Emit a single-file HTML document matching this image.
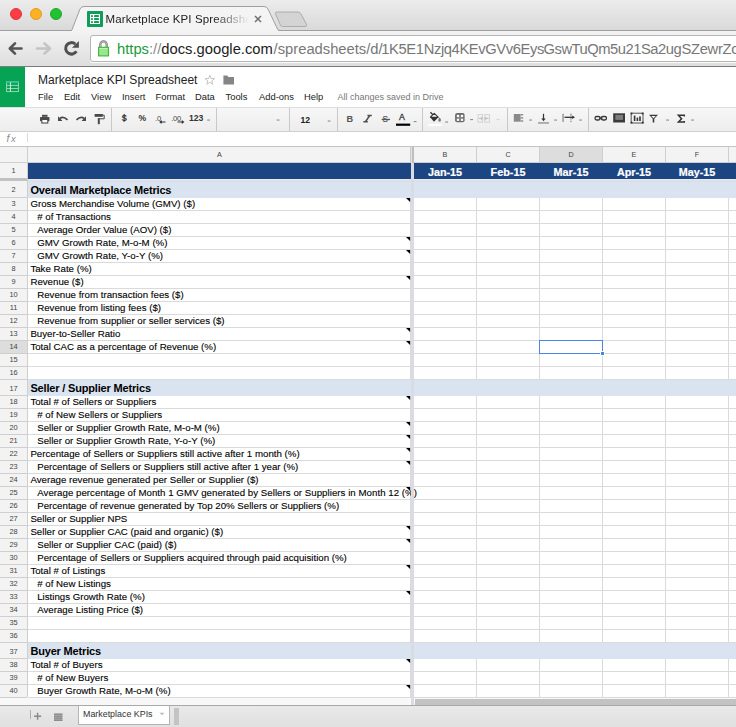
<!DOCTYPE html>
<html><head><meta charset="utf-8">
<style>
*{box-sizing:border-box}
html,body{margin:0;padding:0}
body{width:736px;height:727px;overflow:hidden;position:relative;background:#fff;font-family:"Liberation Sans",sans-serif;}
.a{position:absolute}
.t{position:absolute;white-space:nowrap;line-height:1}
svg{position:absolute;overflow:visible}
</style></head><body>

<!-- ============ CHROME TAB BAR ============ -->
<div class="a" style="left:0;top:0;width:736px;height:31px;background:linear-gradient(#ececec,#d9d9d9)"></div>
<div class="a" style="left:0;top:30px;width:736px;height:1px;background:#a0a0a0"></div>
<!-- traffic lights -->
<div class="a" style="left:10px;top:8px;width:12px;height:12px;border-radius:50%;background:#fc3c44;border:0.5px solid #e0343a"></div>
<div class="a" style="left:30px;top:8px;width:12px;height:12px;border-radius:50%;background:#fdb124;border:0.5px solid #e19c1e"></div>
<div class="a" style="left:50px;top:8px;width:12px;height:12px;border-radius:50%;background:#22c132;border:0.5px solid #1ca82a"></div>
<!-- active tab -->
<svg style="left:0;top:0" width="736" height="31">
  <path d="M71.5,31 L80,9 Q81.2,6.5 84,6.5 L264,6.5 Q266.8,6.5 268,9 L277.5,29 Q278.2,30.5 280,30.5" fill="#f4f4f4" stroke="#a0a0a0" stroke-width="1"/>
  <path d="M275.5,13.8 Q275,12 277,12 L298,12 Q300,12 301,14 L306.5,24.5 Q307.2,26.5 305,26.5 L282.5,26.5 Q281,26.5 280.4,25 Z" fill="#d4d4d4" stroke="#acacac" stroke-width="1"/>
</svg>
<div class="a" style="left:72px;top:30px;width:206px;height:2px;background:#f2f2f2"></div>
<!-- favicon -->
<div class="a" style="left:87px;top:11px;width:16px;height:16px;background:#0f9d58;border-radius:1px"></div>
<svg style="left:87px;top:11px" width="16" height="16">
  <rect x="3" y="3" width="10" height="10" fill="#fff"/>
  <g fill="#0f9d58">
    <rect x="4" y="4" width="1.9" height="1.9" rx="0.4"/><rect x="4" y="7.05" width="1.9" height="1.9" rx="0.4"/><rect x="4" y="10.1" width="1.9" height="1.9" rx="0.4"/>
    <rect x="7" y="4" width="5" height="1.9" rx="0.4"/><rect x="7" y="7.05" width="5" height="1.9" rx="0.4"/><rect x="7" y="10.1" width="5" height="1.9" rx="0.4"/>
  </g>
</svg>
<div class="t" style="left:105.5px;top:14.3px;letter-spacing:0.12px;font-size:11.5px;color:#222;width:146px;height:15px;overflow:hidden;-webkit-mask-image:linear-gradient(90deg,#000 74%,transparent 98%);">Marketplace KPI Spreadsheet</div>
<svg style="left:0;top:0" width="300" height="30"><path d="M255,16 L261,22 M261,16 L255,22" stroke="#707070" stroke-width="1.5"/></svg>

<!-- ============ CHROME TOOLBAR ============ -->
<div class="a" style="left:0;top:31px;width:736px;height:35px;background:linear-gradient(#f3f3f3,#dedede)"></div>
<div class="a" style="left:0;top:66px;width:736px;height:1px;background:#7c7c7c"></div>
<!-- back -->
<svg style="left:8px;top:42px" width="16" height="13">
  <path d="M13.5,6.5 L2.5,6.5 M7,1.3 L1.8,6.5 L7,11.7" fill="none" stroke="#555" stroke-width="2.6" stroke-linecap="round" stroke-linejoin="round"/>
</svg>
<svg style="left:36px;top:42px" width="16" height="13">
  <path d="M1,6.5 L13.5,6.5 M8.5,1.5 L14,6.5 L8.5,11.5" fill="none" stroke="#c4c4c4" stroke-width="2.6" stroke-linecap="round" stroke-linejoin="round"/>
</svg>
<svg style="left:60px;top:38px" width="24" height="22">
  <path d="M16.38,13.31 A5.75,5.75 0 1 1 15.3,6.1" fill="none" stroke="#505050" stroke-width="3"/>
  <path d="M12,9.8 L18.9,9.8 L18.9,3.1 Z" fill="#505050"/>
</svg>
<!-- url box -->
<div class="a" style="left:90px;top:35px;width:700px;height:27px;background:#fff;border:1px solid #b5b5b5;border-radius:3px;box-shadow:0 1px 0 #fafafa"></div>
<!-- lock -->
<svg style="left:90px;top:36px" width="30" height="26">
  <path d="M10.3,11 L10.3,8.6 A3.2,3.2 0 0 1 16.7,8.6 L16.7,11" fill="none" stroke="#7a7a7a" stroke-width="2.3"/>
  <path d="M10.3,11 L10.3,8.6 A3.2,3.2 0 0 1 16.7,8.6 L16.7,11" fill="none" stroke="#d8d8d8" stroke-width="0.7"/>
  <rect x="8.6" y="11.3" width="9.8" height="8.6" fill="#99e98b" stroke="#3bb53b" stroke-width="1.1"/>
  <rect x="9.2" y="12" width="8.6" height="0.8" fill="#c8f2c0"/>
</svg>
<div class="t" style="left:117px;top:42px;font-size:14.75px;color:#222"><span style="color:#1a9b3a">https</span><span style="color:#8a8a8a">://</span>docs.google.com</div>
<div class="t" style="left:273.6px;top:42px;font-size:14.75px;color:#777">/spreadsheets/d/</div>
<div class="t" style="left:381.3px;top:42px;font-size:14.75px;color:#777;letter-spacing:-0.39px">1K5E1Nzjq4KEvGVv6Eys</div>
<div class="t" style="left:543.6px;top:42px;font-size:14.75px;color:#777;letter-spacing:-0.49px">GswTuQm5u21Sa2ug</div>
<div class="t" style="left:681.4px;top:42px;font-size:14.75px;color:#777;letter-spacing:-0.3px">SZewrZc</div>

<!-- ============ SHEETS HEADER ============ -->
<div class="a" style="left:0;top:67px;width:25px;height:40px;background:#06a354"></div>
<svg style="left:0;top:74px" width="26" height="26">
  <rect x="6.6" y="7.8" width="11.8" height="9.8" fill="none" stroke="#9edcb9" stroke-width="0.9"/>
  <rect x="6.2" y="7.2" width="12.6" height="1.7" fill="#34c19a"/>
  <path d="M6.6,11.4 L18.4,11.4 M6.6,14.5 L18.4,14.5" stroke="#9edcb9" stroke-width="0.9"/>
  <path d="M10.4,8.4 L10.4,17.6" stroke="#d7f2df" stroke-width="1"/>
</svg>
<div class="t" style="left:38px;top:74px;font-size:12px;color:#222">Marketplace KPI Spreadsheet</div>
<svg style="left:200px;top:70px" width="20" height="20"><path d="M9.80,5.20 L11.03,8.50 L14.56,8.65 L11.80,10.85 L12.74,14.25 L9.80,12.30 L6.86,14.25 L7.80,10.85 L5.04,8.65 L8.57,8.50 Z" fill="none" stroke="#bdbdbd" stroke-width="0.9"/></svg>
<svg style="left:223px;top:75px" width="12" height="10">
  <path d="M0.4,0.6 L4.2,0.6 L5.4,2 L11,2 L11,9.6 L0.4,9.6 Z" fill="#858585"/>
</svg>
<div class="t" style="left:38px;top:92px;font-size:9.4px;color:#222">File</div>
<div class="t" style="left:64px;top:92px;font-size:9.4px;color:#222">Edit</div>
<div class="t" style="left:91px;top:92px;font-size:9.4px;color:#222">View</div>
<div class="t" style="left:122px;top:92px;font-size:9.4px;color:#222">Insert</div>
<div class="t" style="left:155.5px;top:92px;font-size:9.4px;color:#222">Format</div>
<div class="t" style="left:195px;top:92px;font-size:9.4px;color:#222">Data</div>
<div class="t" style="left:225.5px;top:92px;font-size:9.4px;color:#222">Tools</div>
<div class="t" style="left:259px;top:92px;font-size:9.4px;color:#222">Add-ons</div>
<div class="t" style="left:304px;top:92px;font-size:9.4px;color:#222">Help</div>
<div class="t" style="left:337.5px;top:92.6px;font-size:9px;color:#777">All changes saved in Drive</div>

<!-- ============ SHEETS TOOLBAR ============ -->
<div class="a" style="left:0;top:107px;width:736px;height:25px;background:linear-gradient(#f7f7f7,#ededed);border-top:1px solid #dedede;border-bottom:1px solid #cfcfcf"></div>
<svg style="left:0;top:0" width="736" height="135" viewBox="0 0 736 135">
<g fill="#c8c8c8">
  <rect x="111" y="108" width="1" height="23"/>
  <rect x="216" y="108" width="1" height="23"/>
  <rect x="289" y="108" width="1" height="23"/>
  <rect x="337" y="108" width="1" height="23"/>
  <rect x="422" y="108" width="1" height="23"/>
  <rect x="507" y="108" width="1" height="23"/>
  <rect x="588" y="108" width="1" height="23"/>
</g>
<!-- print -->
<g fill="#4a4a4a">
  <rect x="42" y="114.8" width="5.5" height="2"/>
  <rect x="40" y="117" width="9.5" height="4.2" rx="0.8"/>
  <rect x="41.8" y="119.5" width="6" height="3.5" fill="#fff" stroke="#4a4a4a" stroke-width="1.1"/>
</g>
<!-- undo -->
<path d="M60,118.5 Q63,115.8 67.5,119.8" fill="none" stroke="#4a4a4a" stroke-width="1.8"/>
<path d="M58,116.2 L58,121 L62.5,121 Z" fill="#4a4a4a"/>
<!-- redo -->
<path d="M84,118.5 Q81,115.8 76.5,119.8" fill="none" stroke="#4a4a4a" stroke-width="1.8"/>
<path d="M86,116.2 L86,121 L81.5,121 Z" fill="#4a4a4a"/>
<!-- paint format -->
<g fill="#4a4a4a">
  <rect x="94.6" y="114" width="8.2" height="2.8"/>
  <path d="M102.5,115.2 L104.2,115.2 L104.2,118.8 L99.2,118.8 L99.2,118" fill="none" stroke="#4a4a4a" stroke-width="1"/>
  <rect x="97.8" y="118.2" width="2" height="6"/>
</g>
<!-- $ % -->
<text x="121.6" y="120.6" font-family="Liberation Sans" font-weight="bold" font-size="9.2" fill="#333" transform="translate(121.6,0) scale(0.9,1) translate(-121.6,0)">S</text>
<rect x="123.6" y="113.9" width="1.1" height="8" fill="#333"/>
<text x="138.6" y="120.8" font-family="Liberation Sans" font-weight="bold" font-size="8.6" fill="#333" transform="translate(0,120.8) scale(1,1.12) translate(0,-120.8)">%</text>
<!-- .0 -->
<text x="155" y="121" font-family="Liberation Sans" font-size="7.6" fill="#444">.0</text>
<path d="M160,122 L165.5,122 M161.7,120.6 L160,122 L161.7,123.4" fill="none" stroke="#333" stroke-width="1.1"/>
<!-- .00 -->
<text x="171.3" y="121" font-family="Liberation Sans" font-size="7.6" fill="#444" letter-spacing="-0.3">.00</text>
<path d="M177.5,122 L183.5,122 M181.8,120.6 L183.5,122 L181.8,123.4" fill="none" stroke="#333" stroke-width="1.1"/>
<!-- 123 -->
<text x="189" y="121" font-family="Liberation Sans" font-weight="bold" font-size="8.6" fill="#333">123</text>
<g fill="#8c8c8c">
  <rect x="207.2" y="119.5" width="2.8" height="1.1"/>
  <rect x="276.7" y="119.5" width="2.8" height="1.1"/>
  <rect x="327.7" y="120.5" width="2.8" height="1.1"/>
  <rect x="413.7" y="121.0" width="2.8" height="1.1"/>
  <rect x="445.2" y="121.5" width="2.8" height="1.1"/>
  <rect x="470.2" y="119.0" width="2.8" height="1.1"/>
  <rect x="529.2" y="119.5" width="2.8" height="1.1"/>
  <rect x="554.2" y="119.5" width="2.8" height="1.1"/>
  <rect x="579.2" y="119.5" width="2.8" height="1.1"/>
  <rect x="666.2" y="119.5" width="2.8" height="1.1"/>
  <rect x="691.2" y="119.5" width="2.8" height="1.1"/>
</g>
<rect x="496.7" y="119.0" width="2.8" height="1.1" fill="#d4d4d4"/>
<!-- 12 -->
<text x="300.5" y="123" font-family="Liberation Sans" font-weight="bold" font-size="8.6" fill="#222">12</text>
<!-- B I S A -->
<text x="346.5" y="122.3" font-family="Liberation Sans" font-weight="bold" font-size="9.2" fill="#555">B</text>
<path d="M369.6,115.8 L365.6,121.5 M367.4,115.6 L371.8,115.6 M363.4,121.7 L367.8,121.7" fill="none" stroke="#505050" stroke-width="1.5"/>
<text x="382.6" y="122" font-family="Liberation Sans" font-size="8.2" fill="#555" stroke="#555" stroke-width="0.2">S</text>
<rect x="381.7" y="118.8" width="8.3" height="1.3" fill="#555"/>
<text x="399" y="120.3" font-family="Liberation Sans" font-size="8.8" fill="#333" stroke="#333" stroke-width="0.3">A</text>
<rect x="396" y="123.6" width="14.2" height="2.2" fill="#000"/>
<!-- paint bucket -->
<path d="M430.4,112.2 L433.6,115.4" stroke="#333" stroke-width="1.3"/>
<path d="M434.2,113.4 L430.4,117.2 L438.2,117.2 Z" fill="#fafafa" stroke="#333" stroke-width="1.1" stroke-linejoin="round"/>
<path d="M430,117 L438.6,117 L434,121.7 Z" fill="#333"/>
<path d="M439.6,117.6 Q441.2,119.4 441,120.3 A1.4,1.4 0 0 1 438.2,120.3 Q438,119.4 439.6,117.6 Z" fill="#7a7a7a"/>
<rect x="428.1" y="124.1" width="13.8" height="1.8" fill="#fff"/>
<!-- borders -->
<rect x="455.1" y="113.1" width="9.5" height="9.1" rx="2" fill="#6a6a6a"/>
<g fill="#fbfbfb">
  <rect x="456.8" y="114.8" width="2.4" height="2.4"/><rect x="460.8" y="114.8" width="2.4" height="2.4"/>
  <rect x="456.8" y="118.5" width="2.4" height="2.4"/><rect x="460.8" y="118.5" width="2.4" height="2.4"/>
</g>
<rect x="459.2" y="114.8" width="1.6" height="6.1" fill="#8a8a8a"/>
<rect x="456.8" y="117.2" width="6.4" height="1.3" fill="#8a8a8a"/>
<!-- merge faded -->
<g fill="none" stroke="#d2d2d2" stroke-width="1">
  <rect x="478" y="114.6" width="4.6" height="7.6"/>
  <rect x="484.8" y="114.6" width="4.6" height="7.6"/>
</g>
<path d="M478.8,118.4 L482.6,118.4 M481.2,117 L482.6,118.4 L481.2,119.8 M488.6,118.4 L484.8,118.4 M486.2,117 L484.8,118.4 L486.2,119.8" fill="none" stroke="#c4c4c4" stroke-width="1.1"/>
<!-- align left -->
<g fill="#8a8a8a">
  <rect x="513.8" y="114" width="6.8" height="7.7"/>
  <rect x="520.6" y="114" width="2.6" height="1.4"/>
  <rect x="520.6" y="117.2" width="2.6" height="1.4"/>
  <rect x="520.6" y="120.3" width="2.6" height="1.4"/>
</g>
<!-- valign bottom -->
<path d="M543.5,113.8 L543.5,119.5" stroke="#333" stroke-width="1.2"/>
<path d="M541.3,118.4 L543.5,121.2 L545.7,118.4 Z" fill="#333"/>
<rect x="538" y="122.2" width="11" height="1.5" fill="#9a9a9a"/>
<!-- wrap -->
<rect x="562.2" y="113.8" width="1.8" height="8.2" fill="#a8a8a8"/>
<path d="M570.9,113.6 L570.9,122.2" stroke="#b0b0b0" stroke-width="1.7" stroke-dasharray="2.6,0.9"/>
<path d="M564.5,117.3 L573,117.3" stroke="#333" stroke-width="1.3"/>
<path d="M572.2,115.5 L575,117.3 L572.2,119.1 Z" fill="#333"/>
<!-- link -->
<g fill="none" stroke="#3a3a3a" stroke-width="1.3">
  <rect x="595" y="116.5" width="5.2" height="3.5" rx="1.75"/>
  <rect x="601.3" y="116.5" width="5.2" height="3.5" rx="1.75"/>
  <path d="M599,118.25 L602.5,118.25"/>
</g>
<!-- comment -->
<rect x="613.2" y="113.3" width="11.8" height="9.2" fill="#3a3a3a"/>
<rect x="615.4" y="114.9" width="7.6" height="5" fill="#7d7d7d"/>
<!-- chart -->
<rect x="631.2" y="113.2" width="11.8" height="9.8" fill="none" stroke="#555" stroke-width="1"/>
<g fill="#333">
  <rect x="630.6" y="112.6" width="1.8" height="1.8"/><rect x="641.8" y="112.6" width="1.8" height="1.8"/>
  <rect x="630.6" y="121.7" width="1.8" height="1.8"/><rect x="641.8" y="121.7" width="1.8" height="1.8"/>
  <rect x="633.8" y="115.6" width="1.6" height="5.4"/>
  <rect x="636.6" y="117.6" width="1.6" height="3.4"/>
  <rect x="639.2" y="116.4" width="1.6" height="4.6"/>
</g>
<!-- filter -->
<path d="M649,114.8 L658,114.8 L654.3,118.8 L654.3,122.5 L652.7,122.5 L652.7,118.8 Z" fill="#3a3a3a"/>
<path d="M651.3,116 L655.7,116 L653.5,118.3 Z" fill="#f4f4f4"/>
<!-- sigma -->
<path d="M684.3,116.4 L684.3,115.2 L678.4,115.2 L681.6,118.65 L678.4,122.1 L684.3,122.1 L684.3,120.9" fill="none" stroke="#333" stroke-width="1.5" stroke-linejoin="miter"/>
</svg>


<!-- ============ FORMULA BAR ============ -->
<div class="a" style="left:0;top:132px;width:736px;height:15px;background:#fff;border-bottom:1px solid #c9c9c9"></div>
<div class="t" style="left:6.5px;top:133.2px;font-style:italic;font-size:10.5px;color:#8c8c8c">f</div><div class="t" style="left:11px;top:133.6px;font-style:italic;font-size:9.5px;color:#8c8c8c">x</div>
<div class="a" style="left:27px;top:133px;width:1px;height:9px;background:#d3dae2"></div>


<!-- ============ BOTTOM ============ -->
<div class="a" style="left:0;top:697px;width:736px;height:8px;background:#f8f8f8"></div>
<div class="a" style="left:415px;top:699px;width:321px;height:6px;background:#c3c3c3"></div>
<div class="a" style="left:0;top:705px;width:736px;height:22px;background:linear-gradient(#e9e9e9,#e0e0e0);border-top:1px solid #a8a8a8"></div>
<div class="a" style="left:30px;top:710px;width:1px;height:8.5px;background:#b0b0b0"></div>
<svg style="left:0;top:700px" width="200" height="27">
  <path d="M37.6,12.8 L37.6,19.8 M34,16.3 L41.2,16.3" stroke="#8a8a8a" stroke-width="1.5"/>
  <rect x="54" y="13.6" width="8.4" height="7.4" fill="#a6a6a6"/><g fill="#8c8c8c"><rect x="54" y="13.6" width="8.4" height="1.3"/><rect x="54" y="16.2" width="8.4" height="1"/><rect x="54" y="18.2" width="8.4" height="1"/><rect x="54" y="20" width="8.4" height="1"/></g>
</svg>
<div class="a" style="left:78px;top:705px;width:92px;height:20px;background:#fff;border:1px solid #b4b4b4;border-top-color:#a8a8a8"></div>
<div class="t" style="left:83px;top:709.7px;font-size:8.9px;color:#333">Marketplace KPIs</div>
<svg style="left:159px;top:712px" width="6" height="4"><path d="M0.5,0.7 L5.5,0.7 L3,3.2 Z" fill="#bdbdbd"/></svg>
<div class="a" style="left:174px;top:708px;width:5px;height:17px;background:#c4c4c4"></div>
<div class="a" style="left:0;top:146px;width:736px;height:1px;background:#c4c4c4"></div>
<div class="a" style="left:0;top:147px;width:736px;height:15px;background:#f3f3f3"></div>
<div class="a" style="left:540px;top:147px;width:62px;height:15px;background:#dddddd"></div>
<div class="a" style="left:0;top:162px;width:736px;height:1px;background:#cfcfcf"></div>
<div class="a" style="left:0;top:163px;width:27px;height:534px;background:#f3f3f3"></div>
<div class="a" style="left:27px;top:147px;width:1px;height:550px;background:#cfcfcf"></div>
<div class="a" style="left:476px;top:147px;width:1px;height:15px;background:#cfcfcf"></div>
<div class="a" style="left:539px;top:147px;width:1px;height:15px;background:#cfcfcf"></div>
<div class="a" style="left:602px;top:147px;width:1px;height:15px;background:#cfcfcf"></div>
<div class="a" style="left:665px;top:147px;width:1px;height:15px;background:#cfcfcf"></div>
<div class="a" style="left:728px;top:147px;width:1px;height:15px;background:#cfcfcf"></div>
<div class="t" style="left:199.5px;width:40px;text-align:center;top:150.91px;font-size:7.2px;color:#444">A</div>
<div class="t" style="left:425px;width:40px;text-align:center;top:150.91px;font-size:7.2px;color:#444">B</div>
<div class="t" style="left:488px;width:40px;text-align:center;top:150.91px;font-size:7.2px;color:#444">C</div>
<div class="t" style="left:551px;width:40px;text-align:center;top:150.91px;font-size:7.2px;color:#444">D</div>
<div class="t" style="left:614px;width:40px;text-align:center;top:150.91px;font-size:7.2px;color:#444">E</div>
<div class="t" style="left:677px;width:40px;text-align:center;top:150.91px;font-size:7.2px;color:#444">F</div>
<div class="a" style="left:410px;top:181px;width:1px;height:516px;background:#dadada"></div>
<div class="a" style="left:476px;top:181px;width:1px;height:516px;background:#dadada"></div>
<div class="a" style="left:539px;top:181px;width:1px;height:516px;background:#dadada"></div>
<div class="a" style="left:602px;top:181px;width:1px;height:516px;background:#dadada"></div>
<div class="a" style="left:665px;top:181px;width:1px;height:516px;background:#dadada"></div>
<div class="a" style="left:728px;top:181px;width:1px;height:516px;background:#dadada"></div>
<div class="a" style="left:28px;top:163px;width:708px;height:16px;background:#1c4682"></div>
<div class="a" style="left:0;top:197px;width:27px;height:1px;background:#cfcfcf"></div>
<div class="a" style="left:28px;top:182px;width:708px;height:16px;background:#dae4f0"></div>
<div class="a" style="left:0;top:210px;width:27px;height:1px;background:#cfcfcf"></div>
<div class="a" style="left:28px;top:210px;width:708px;height:1px;background:#dadada"></div>
<div class="a" style="left:0;top:223px;width:27px;height:1px;background:#cfcfcf"></div>
<div class="a" style="left:28px;top:223px;width:708px;height:1px;background:#dadada"></div>
<div class="a" style="left:0;top:236px;width:27px;height:1px;background:#cfcfcf"></div>
<div class="a" style="left:28px;top:236px;width:708px;height:1px;background:#dadada"></div>
<div class="a" style="left:0;top:249px;width:27px;height:1px;background:#cfcfcf"></div>
<div class="a" style="left:28px;top:249px;width:708px;height:1px;background:#dadada"></div>
<div class="a" style="left:0;top:262px;width:27px;height:1px;background:#cfcfcf"></div>
<div class="a" style="left:28px;top:262px;width:708px;height:1px;background:#dadada"></div>
<div class="a" style="left:0;top:275px;width:27px;height:1px;background:#cfcfcf"></div>
<div class="a" style="left:28px;top:275px;width:708px;height:1px;background:#dadada"></div>
<div class="a" style="left:0;top:288px;width:27px;height:1px;background:#cfcfcf"></div>
<div class="a" style="left:28px;top:288px;width:708px;height:1px;background:#dadada"></div>
<div class="a" style="left:0;top:301px;width:27px;height:1px;background:#cfcfcf"></div>
<div class="a" style="left:28px;top:301px;width:708px;height:1px;background:#dadada"></div>
<div class="a" style="left:0;top:314px;width:27px;height:1px;background:#cfcfcf"></div>
<div class="a" style="left:28px;top:314px;width:708px;height:1px;background:#dadada"></div>
<div class="a" style="left:0;top:327px;width:27px;height:1px;background:#cfcfcf"></div>
<div class="a" style="left:28px;top:327px;width:708px;height:1px;background:#dadada"></div>
<div class="a" style="left:0;top:340px;width:27px;height:1px;background:#cfcfcf"></div>
<div class="a" style="left:28px;top:340px;width:708px;height:1px;background:#dadada"></div>
<div class="a" style="left:0;top:341px;width:27px;height:12px;background:#dddddd"></div>
<div class="a" style="left:0;top:353px;width:27px;height:1px;background:#cfcfcf"></div>
<div class="a" style="left:28px;top:353px;width:708px;height:1px;background:#dadada"></div>
<div class="a" style="left:0;top:366px;width:27px;height:1px;background:#cfcfcf"></div>
<div class="a" style="left:28px;top:366px;width:708px;height:1px;background:#dadada"></div>
<div class="a" style="left:0;top:379px;width:27px;height:1px;background:#cfcfcf"></div>
<div class="a" style="left:28px;top:379px;width:708px;height:1px;background:#dadada"></div>
<div class="a" style="left:0;top:395px;width:27px;height:1px;background:#cfcfcf"></div>
<div class="a" style="left:28px;top:380px;width:708px;height:16px;background:#dae4f0"></div>
<div class="a" style="left:0;top:408px;width:27px;height:1px;background:#cfcfcf"></div>
<div class="a" style="left:28px;top:408px;width:708px;height:1px;background:#dadada"></div>
<div class="a" style="left:0;top:421px;width:27px;height:1px;background:#cfcfcf"></div>
<div class="a" style="left:28px;top:421px;width:708px;height:1px;background:#dadada"></div>
<div class="a" style="left:0;top:434px;width:27px;height:1px;background:#cfcfcf"></div>
<div class="a" style="left:28px;top:434px;width:708px;height:1px;background:#dadada"></div>
<div class="a" style="left:0;top:447px;width:27px;height:1px;background:#cfcfcf"></div>
<div class="a" style="left:28px;top:447px;width:708px;height:1px;background:#dadada"></div>
<div class="a" style="left:0;top:460px;width:27px;height:1px;background:#cfcfcf"></div>
<div class="a" style="left:28px;top:460px;width:708px;height:1px;background:#dadada"></div>
<div class="a" style="left:0;top:473px;width:27px;height:1px;background:#cfcfcf"></div>
<div class="a" style="left:28px;top:473px;width:708px;height:1px;background:#dadada"></div>
<div class="a" style="left:0;top:486px;width:27px;height:1px;background:#cfcfcf"></div>
<div class="a" style="left:28px;top:486px;width:708px;height:1px;background:#dadada"></div>
<div class="a" style="left:0;top:499px;width:27px;height:1px;background:#cfcfcf"></div>
<div class="a" style="left:28px;top:499px;width:708px;height:1px;background:#dadada"></div>
<div class="a" style="left:0;top:512px;width:27px;height:1px;background:#cfcfcf"></div>
<div class="a" style="left:28px;top:512px;width:708px;height:1px;background:#dadada"></div>
<div class="a" style="left:0;top:525px;width:27px;height:1px;background:#cfcfcf"></div>
<div class="a" style="left:28px;top:525px;width:708px;height:1px;background:#dadada"></div>
<div class="a" style="left:0;top:538px;width:27px;height:1px;background:#cfcfcf"></div>
<div class="a" style="left:28px;top:538px;width:708px;height:1px;background:#dadada"></div>
<div class="a" style="left:0;top:551px;width:27px;height:1px;background:#cfcfcf"></div>
<div class="a" style="left:28px;top:551px;width:708px;height:1px;background:#dadada"></div>
<div class="a" style="left:0;top:564px;width:27px;height:1px;background:#cfcfcf"></div>
<div class="a" style="left:28px;top:564px;width:708px;height:1px;background:#dadada"></div>
<div class="a" style="left:0;top:577px;width:27px;height:1px;background:#cfcfcf"></div>
<div class="a" style="left:28px;top:577px;width:708px;height:1px;background:#dadada"></div>
<div class="a" style="left:0;top:590px;width:27px;height:1px;background:#cfcfcf"></div>
<div class="a" style="left:28px;top:590px;width:708px;height:1px;background:#dadada"></div>
<div class="a" style="left:0;top:603px;width:27px;height:1px;background:#cfcfcf"></div>
<div class="a" style="left:28px;top:603px;width:708px;height:1px;background:#dadada"></div>
<div class="a" style="left:0;top:616px;width:27px;height:1px;background:#cfcfcf"></div>
<div class="a" style="left:28px;top:616px;width:708px;height:1px;background:#dadada"></div>
<div class="a" style="left:0;top:629px;width:27px;height:1px;background:#cfcfcf"></div>
<div class="a" style="left:28px;top:629px;width:708px;height:1px;background:#dadada"></div>
<div class="a" style="left:0;top:642px;width:27px;height:1px;background:#cfcfcf"></div>
<div class="a" style="left:28px;top:642px;width:708px;height:1px;background:#dadada"></div>
<div class="a" style="left:0;top:658px;width:27px;height:1px;background:#cfcfcf"></div>
<div class="a" style="left:28px;top:643px;width:708px;height:16px;background:#dae4f0"></div>
<div class="a" style="left:0;top:671px;width:27px;height:1px;background:#cfcfcf"></div>
<div class="a" style="left:28px;top:671px;width:708px;height:1px;background:#dadada"></div>
<div class="a" style="left:0;top:684px;width:27px;height:1px;background:#cfcfcf"></div>
<div class="a" style="left:28px;top:684px;width:708px;height:1px;background:#dadada"></div>
<div class="a" style="left:0;top:697px;width:27px;height:1px;background:#cfcfcf"></div>
<div class="a" style="left:28px;top:697px;width:708px;height:1px;background:#dadada"></div>
<div class="a" style="left:539px;top:340px;width:64px;height:14px;border:1.5px solid #4a86e8"></div>
<div class="a" style="left:600px;top:351px;width:5px;height:5px;background:#4a86e8;border:1px solid #fff"></div>
<svg style="left:406px;top:198px" width="5" height="5"><path d="M0,0 L4.1,0 L4.1,4.1 Z" fill="#000"/></svg>
<svg style="left:406px;top:237px" width="5" height="5"><path d="M0,0 L4.1,0 L4.1,4.1 Z" fill="#000"/></svg>
<svg style="left:406px;top:250px" width="5" height="5"><path d="M0,0 L4.1,0 L4.1,4.1 Z" fill="#000"/></svg>
<svg style="left:406px;top:276px" width="5" height="5"><path d="M0,0 L4.1,0 L4.1,4.1 Z" fill="#000"/></svg>
<svg style="left:406px;top:328px" width="5" height="5"><path d="M0,0 L4.1,0 L4.1,4.1 Z" fill="#000"/></svg>
<svg style="left:406px;top:341px" width="5" height="5"><path d="M0,0 L4.1,0 L4.1,4.1 Z" fill="#000"/></svg>
<svg style="left:406px;top:396px" width="5" height="5"><path d="M0,0 L4.1,0 L4.1,4.1 Z" fill="#000"/></svg>
<svg style="left:406px;top:422px" width="5" height="5"><path d="M0,0 L4.1,0 L4.1,4.1 Z" fill="#000"/></svg>
<svg style="left:406px;top:435px" width="5" height="5"><path d="M0,0 L4.1,0 L4.1,4.1 Z" fill="#000"/></svg>
<svg style="left:406px;top:448px" width="5" height="5"><path d="M0,0 L4.1,0 L4.1,4.1 Z" fill="#000"/></svg>
<svg style="left:406px;top:461px" width="5" height="5"><path d="M0,0 L4.1,0 L4.1,4.1 Z" fill="#000"/></svg>
<svg style="left:406px;top:487px" width="5" height="5"><path d="M0,0 L4.1,0 L4.1,4.1 Z" fill="#000"/></svg>
<svg style="left:406px;top:526px" width="5" height="5"><path d="M0,0 L4.1,0 L4.1,4.1 Z" fill="#000"/></svg>
<svg style="left:406px;top:539px" width="5" height="5"><path d="M0,0 L4.1,0 L4.1,4.1 Z" fill="#000"/></svg>
<svg style="left:406px;top:565px" width="5" height="5"><path d="M0,0 L4.1,0 L4.1,4.1 Z" fill="#000"/></svg>
<svg style="left:406px;top:591px" width="5" height="5"><path d="M0,0 L4.1,0 L4.1,4.1 Z" fill="#000"/></svg>
<svg style="left:406px;top:659px" width="5" height="5"><path d="M0,0 L4.1,0 L4.1,4.1 Z" fill="#000"/></svg>
<svg style="left:406px;top:685px" width="5" height="5"><path d="M0,0 L4.1,0 L4.1,4.1 Z" fill="#000"/></svg>
<div class="t" style="left:0;width:27px;text-align:center;top:166.74px;font-size:7.4px;color:#444">1</div>
<div class="t" style="left:0;width:27px;text-align:center;top:185.74px;font-size:7.4px;color:#444">2</div>
<div class="t" style="left:30.4px;top:184.69px;font-size:11px;font-weight:bold;color:#000;letter-spacing:-0.17px">Overall Marketplace Metrics</div>
<div class="t" style="left:0;width:27px;text-align:center;top:199.74px;font-size:7.4px;color:#444">3</div>
<div class="t" style="left:30.4px;top:198.79px;font-size:9.7px;color:#000;-webkit-text-stroke:0.2px rgba(0,0,0,0.6);">Gross Merchandise Volume (GMV) ($)</div>
<div class="t" style="left:0;width:27px;text-align:center;top:212.74px;font-size:7.4px;color:#444">4</div>
<div class="t" style="left:37.2px;top:211.79px;font-size:9.7px;color:#000;-webkit-text-stroke:0.2px rgba(0,0,0,0.6);"># of Transactions</div>
<div class="t" style="left:0;width:27px;text-align:center;top:225.74px;font-size:7.4px;color:#444">5</div>
<div class="t" style="left:37.2px;top:224.79px;font-size:9.7px;color:#000;-webkit-text-stroke:0.2px rgba(0,0,0,0.6);">Average Order Value (AOV) ($)</div>
<div class="t" style="left:0;width:27px;text-align:center;top:238.74px;font-size:7.4px;color:#444">6</div>
<div class="t" style="left:37.2px;top:237.79px;font-size:9.7px;color:#000;-webkit-text-stroke:0.2px rgba(0,0,0,0.6);">GMV Growth Rate, M-o-M (%)</div>
<div class="t" style="left:0;width:27px;text-align:center;top:251.74px;font-size:7.4px;color:#444">7</div>
<div class="t" style="left:37.2px;top:250.79px;font-size:9.7px;color:#000;-webkit-text-stroke:0.2px rgba(0,0,0,0.6);">GMV Growth Rate, Y-o-Y (%)</div>
<div class="t" style="left:0;width:27px;text-align:center;top:264.74px;font-size:7.4px;color:#444">8</div>
<div class="t" style="left:30.4px;top:263.79px;font-size:9.7px;color:#000;-webkit-text-stroke:0.2px rgba(0,0,0,0.6);">Take Rate (%)</div>
<div class="t" style="left:0;width:27px;text-align:center;top:277.74px;font-size:7.4px;color:#444">9</div>
<div class="t" style="left:30.4px;top:276.79px;font-size:9.7px;color:#000;-webkit-text-stroke:0.2px rgba(0,0,0,0.6);">Revenue ($)</div>
<div class="t" style="left:0;width:27px;text-align:center;top:290.74px;font-size:7.4px;color:#444">10</div>
<div class="t" style="left:37.2px;top:289.79px;font-size:9.7px;color:#000;-webkit-text-stroke:0.2px rgba(0,0,0,0.6);">Revenue from transaction fees ($)</div>
<div class="t" style="left:0;width:27px;text-align:center;top:303.74px;font-size:7.4px;color:#444">11</div>
<div class="t" style="left:37.2px;top:302.79px;font-size:9.7px;color:#000;-webkit-text-stroke:0.2px rgba(0,0,0,0.6);">Revenue from listing fees ($)</div>
<div class="t" style="left:0;width:27px;text-align:center;top:316.74px;font-size:7.4px;color:#444">12</div>
<div class="t" style="left:37.2px;top:315.79px;font-size:9.7px;color:#000;-webkit-text-stroke:0.2px rgba(0,0,0,0.6);">Revenue from supplier or seller services ($)</div>
<div class="t" style="left:0;width:27px;text-align:center;top:329.74px;font-size:7.4px;color:#444">13</div>
<div class="t" style="left:30.4px;top:328.79px;font-size:9.7px;color:#000;-webkit-text-stroke:0.2px rgba(0,0,0,0.6);">Buyer-to-Seller Ratio</div>
<div class="t" style="left:0;width:27px;text-align:center;top:342.74px;font-size:7.4px;color:#444">14</div>
<div class="t" style="left:30.4px;top:341.79px;font-size:9.7px;color:#000;-webkit-text-stroke:0.2px rgba(0,0,0,0.6);">Total CAC as a percentage of Revenue (%)</div>
<div class="t" style="left:0;width:27px;text-align:center;top:355.74px;font-size:7.4px;color:#444">15</div>
<div class="t" style="left:0;width:27px;text-align:center;top:368.74px;font-size:7.4px;color:#444">16</div>
<div class="t" style="left:0;width:27px;text-align:center;top:384.74px;font-size:7.4px;color:#444">17</div>
<div class="t" style="left:30.4px;top:382.69px;font-size:11px;font-weight:bold;color:#000;letter-spacing:-0.17px">Seller / Supplier Metrics</div>
<div class="t" style="left:0;width:27px;text-align:center;top:397.74px;font-size:7.4px;color:#444">18</div>
<div class="t" style="left:30.4px;top:396.79px;font-size:9.7px;color:#000;-webkit-text-stroke:0.2px rgba(0,0,0,0.6);">Total # of Sellers or Suppliers</div>
<div class="t" style="left:0;width:27px;text-align:center;top:410.74px;font-size:7.4px;color:#444">19</div>
<div class="t" style="left:37.2px;top:409.79px;font-size:9.7px;color:#000;-webkit-text-stroke:0.2px rgba(0,0,0,0.6);"># of New Sellers or Suppliers</div>
<div class="t" style="left:0;width:27px;text-align:center;top:423.74px;font-size:7.4px;color:#444">20</div>
<div class="t" style="left:37.2px;top:422.79px;font-size:9.7px;color:#000;-webkit-text-stroke:0.2px rgba(0,0,0,0.6);">Seller or Supplier Growth Rate, M-o-M (%)</div>
<div class="t" style="left:0;width:27px;text-align:center;top:436.74px;font-size:7.4px;color:#444">21</div>
<div class="t" style="left:37.2px;top:435.79px;font-size:9.7px;color:#000;-webkit-text-stroke:0.2px rgba(0,0,0,0.6);">Seller or Supplier Growth Rate, Y-o-Y (%)</div>
<div class="t" style="left:0;width:27px;text-align:center;top:449.74px;font-size:7.4px;color:#444">22</div>
<div class="t" style="left:30.4px;top:448.79px;font-size:9.7px;color:#000;-webkit-text-stroke:0.2px rgba(0,0,0,0.6);">Percentage of Sellers or Suppliers still active after 1 month (%)</div>
<div class="t" style="left:0;width:27px;text-align:center;top:462.74px;font-size:7.4px;color:#444">23</div>
<div class="t" style="left:37.2px;top:461.79px;font-size:9.7px;color:#000;-webkit-text-stroke:0.2px rgba(0,0,0,0.6);">Percentage of Sellers or Suppliers still active after 1 year (%)</div>
<div class="t" style="left:0;width:27px;text-align:center;top:475.74px;font-size:7.4px;color:#444">24</div>
<div class="t" style="left:30.4px;top:474.79px;font-size:9.7px;color:#000;-webkit-text-stroke:0.2px rgba(0,0,0,0.6);">Average revenue generated per Seller or Supplier ($)</div>
<div class="t" style="left:0;width:27px;text-align:center;top:488.74px;font-size:7.4px;color:#444">25</div>
<div class="t" style="left:37.2px;top:487.79px;font-size:9.7px;color:#000;-webkit-text-stroke:0.2px rgba(0,0,0,0.6);letter-spacing:0.03px;">Average percentage of Month 1 GMV generated by Sellers or Suppliers in Month 12 (%)</div>
<div class="t" style="left:0;width:27px;text-align:center;top:501.74px;font-size:7.4px;color:#444">26</div>
<div class="t" style="left:37.2px;top:500.79px;font-size:9.7px;color:#000;-webkit-text-stroke:0.2px rgba(0,0,0,0.6);">Percentage of revenue generated by Top 20% Sellers or Suppliers (%)</div>
<div class="t" style="left:0;width:27px;text-align:center;top:514.74px;font-size:7.4px;color:#444">27</div>
<div class="t" style="left:30.4px;top:513.79px;font-size:9.7px;color:#000;-webkit-text-stroke:0.2px rgba(0,0,0,0.6);">Seller or Supplier NPS</div>
<div class="t" style="left:0;width:27px;text-align:center;top:527.74px;font-size:7.4px;color:#444">28</div>
<div class="t" style="left:30.4px;top:526.79px;font-size:9.7px;color:#000;-webkit-text-stroke:0.2px rgba(0,0,0,0.6);">Seller or Supplier CAC (paid and organic) ($)</div>
<div class="t" style="left:0;width:27px;text-align:center;top:540.74px;font-size:7.4px;color:#444">29</div>
<div class="t" style="left:37.2px;top:539.79px;font-size:9.7px;color:#000;-webkit-text-stroke:0.2px rgba(0,0,0,0.6);">Seller or Supplier CAC (paid) ($)</div>
<div class="t" style="left:0;width:27px;text-align:center;top:553.74px;font-size:7.4px;color:#444">30</div>
<div class="t" style="left:37.2px;top:552.79px;font-size:9.7px;color:#000;-webkit-text-stroke:0.2px rgba(0,0,0,0.6);">Percentage of Sellers or Suppliers acquired through paid acquisition (%)</div>
<div class="t" style="left:0;width:27px;text-align:center;top:566.74px;font-size:7.4px;color:#444">31</div>
<div class="t" style="left:30.4px;top:565.79px;font-size:9.7px;color:#000;-webkit-text-stroke:0.2px rgba(0,0,0,0.6);">Total # of Listings</div>
<div class="t" style="left:0;width:27px;text-align:center;top:579.74px;font-size:7.4px;color:#444">32</div>
<div class="t" style="left:37.2px;top:578.79px;font-size:9.7px;color:#000;-webkit-text-stroke:0.2px rgba(0,0,0,0.6);"># of New Listings</div>
<div class="t" style="left:0;width:27px;text-align:center;top:592.74px;font-size:7.4px;color:#444">33</div>
<div class="t" style="left:37.2px;top:591.79px;font-size:9.7px;color:#000;-webkit-text-stroke:0.2px rgba(0,0,0,0.6);">Listings Growth Rate (%)</div>
<div class="t" style="left:0;width:27px;text-align:center;top:605.74px;font-size:7.4px;color:#444">34</div>
<div class="t" style="left:37.2px;top:604.79px;font-size:9.7px;color:#000;-webkit-text-stroke:0.2px rgba(0,0,0,0.6);">Average Listing Price ($)</div>
<div class="t" style="left:0;width:27px;text-align:center;top:618.74px;font-size:7.4px;color:#444">35</div>
<div class="t" style="left:0;width:27px;text-align:center;top:631.74px;font-size:7.4px;color:#444">36</div>
<div class="t" style="left:0;width:27px;text-align:center;top:647.74px;font-size:7.4px;color:#444">37</div>
<div class="t" style="left:30.4px;top:645.69px;font-size:11px;font-weight:bold;color:#000;letter-spacing:-0.17px">Buyer Metrics</div>
<div class="t" style="left:0;width:27px;text-align:center;top:660.74px;font-size:7.4px;color:#444">38</div>
<div class="t" style="left:30.4px;top:659.79px;font-size:9.7px;color:#000;-webkit-text-stroke:0.2px rgba(0,0,0,0.6);">Total # of Buyers</div>
<div class="t" style="left:0;width:27px;text-align:center;top:673.74px;font-size:7.4px;color:#444">39</div>
<div class="t" style="left:37.2px;top:672.79px;font-size:9.7px;color:#000;-webkit-text-stroke:0.2px rgba(0,0,0,0.6);"># of New Buyers</div>
<div class="t" style="left:0;width:27px;text-align:center;top:686.74px;font-size:7.4px;color:#444">40</div>
<div class="t" style="left:37.2px;top:685.79px;font-size:9.7px;color:#000;-webkit-text-stroke:0.2px rgba(0,0,0,0.6);">Buyer Growth Rate, M-o-M (%)</div>
<div class="t" style="left:415px;width:60px;text-align:center;top:166.86px;font-size:10.8px;font-weight:bold;color:#fff;-webkit-text-stroke:0.2px #fff">Jan-15</div>
<div class="t" style="left:478px;width:60px;text-align:center;top:166.86px;font-size:10.8px;font-weight:bold;color:#fff;-webkit-text-stroke:0.2px #fff">Feb-15</div>
<div class="t" style="left:541px;width:60px;text-align:center;top:166.86px;font-size:10.8px;font-weight:bold;color:#fff;-webkit-text-stroke:0.2px #fff">Mar-15</div>
<div class="t" style="left:604px;width:60px;text-align:center;top:166.86px;font-size:10.8px;font-weight:bold;color:#fff;-webkit-text-stroke:0.2px #fff">Apr-15</div>
<div class="t" style="left:667px;width:60px;text-align:center;top:166.86px;font-size:10.8px;font-weight:bold;color:#fff;-webkit-text-stroke:0.2px #fff">May-15</div>
<div class="a" style="left:0;top:178px;width:27px;height:3px;background:#c2c2c2"></div>
<div class="a" style="left:28px;top:179px;width:708px;height:1px;background:#e9ebf0"></div>
<div class="a" style="left:28px;top:180px;width:708px;height:2px;background:#dcdfe7"></div>
<div class="a" style="left:410px;top:147px;width:1px;height:15px;background:#c9c9c9"></div>
<div class="a" style="left:411px;top:147px;width:1px;height:16px;background:#dfe3ec"></div>
<div class="a" style="left:412px;top:147px;width:2px;height:16px;background:#bebebe"></div>
<div class="a" style="left:411px;top:163px;width:3px;height:542px;background:#d9dce5"></div>
</body></html>
